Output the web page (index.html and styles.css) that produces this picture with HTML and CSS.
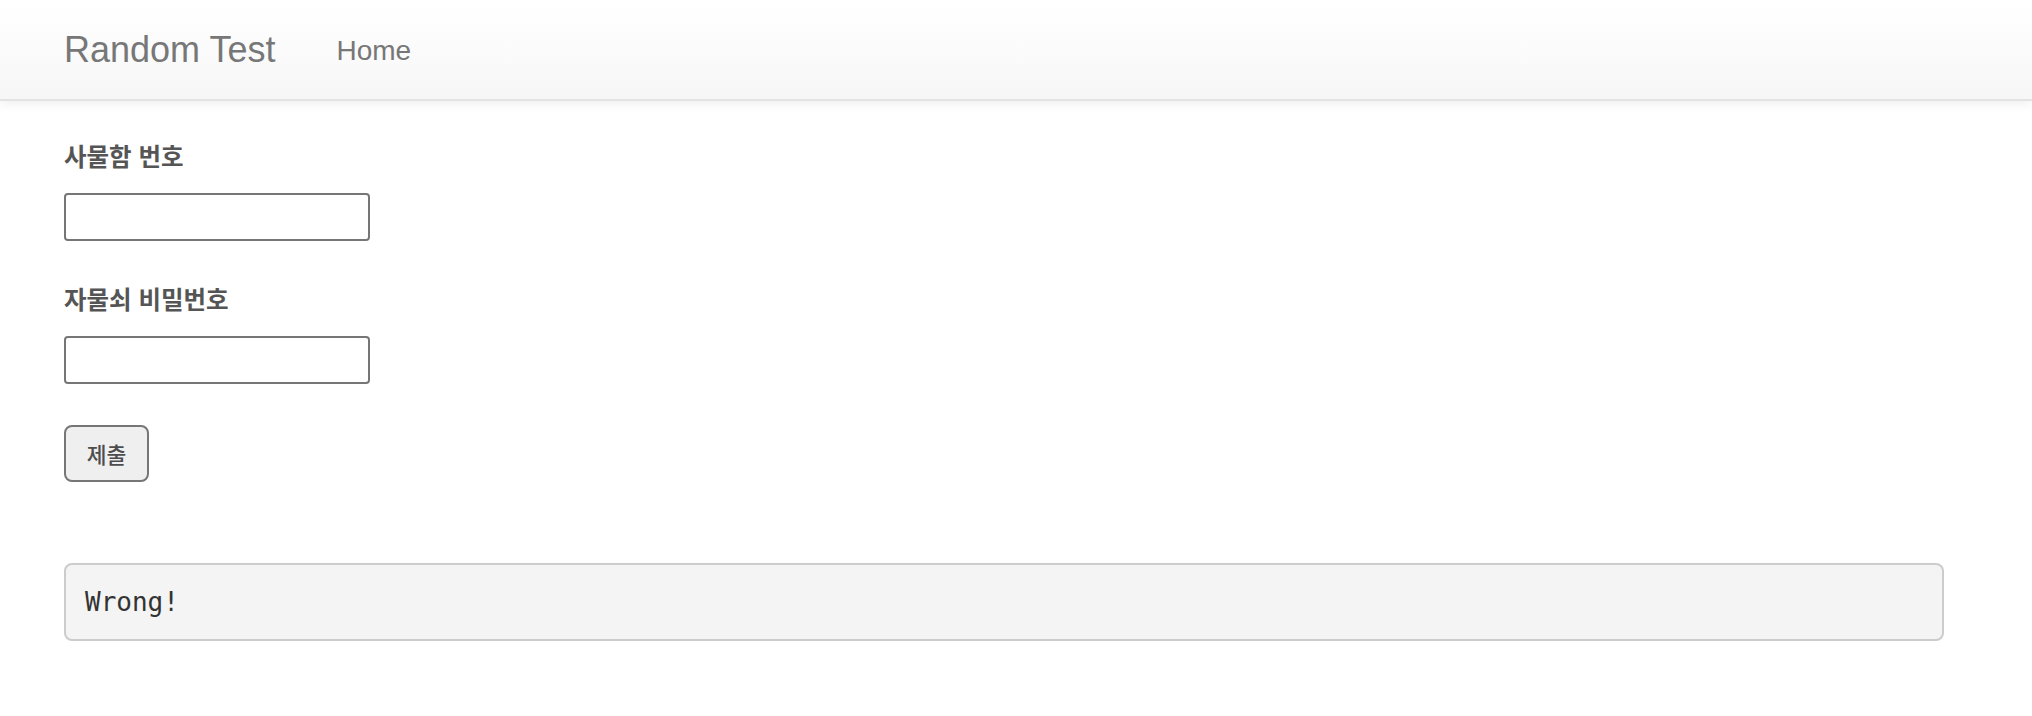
FILE: index.html
```html
<!DOCTYPE html>
<html lang="ko">
<head>
<meta charset="utf-8">
<title>Random Test</title>
<link rel="stylesheet" href="styles.css">
</head>
<body>
<nav class="navbar">
  <div class="navbar-inner">
    <a class="brand" href="#">Random Test</a>
    <ul class="nav">
      <li><a class="nav-link" href="#">Home</a></li>
    </ul>
  </div>
</nav>
<main class="container">
  <form class="form">
    <div class="field">
      <label class="label" for="box">사물함 번호</label>
      <input class="input" id="box" type="text">
    </div>
    <div class="field">
      <label class="label" for="pw">자물쇠 비밀번호</label>
      <input class="input" id="pw" type="text">
    </div>
    <button class="btn" type="button">제출</button>
  </form>
  <pre class="result">Wrong!</pre>
</main>
</body>
</html>
```
FILE: styles.css
```css
* { box-sizing: border-box; }
html, body { margin: 0; padding: 0; background: #fff; }
body {
  font-family: "Liberation Sans", "Noto Sans CJK KR", Arial, sans-serif;
  color: #333;
}
.navbar {
  height: 101px;
  background: linear-gradient(to bottom, #ffffff 0%, #f7f7f7 100%);
  border-bottom: 2px solid #e3e3e3;
  box-shadow: 0 2px 10px rgba(0, 0, 0, 0.075);
}
.navbar-inner {
  display: flex;
  align-items: flex-start;
  padding-left: 64px;
}
.brand {
  font-size: 36px;
  line-height: 40px;
  padding-top: 30px;
  color: #777;
  text-decoration: none;
}
.nav {
  list-style: none;
  margin: 0 0 0 61px;
  padding: 0;
  display: flex;
}
.nav-link {
  display: block;
  font-size: 28px;
  line-height: 40px;
  padding-top: 31px;
  color: #777;
  text-decoration: none;
}
.container {
  width: 1880px;
  margin-left: 64px;
  padding-top: 40px;
}
.form {
  display: flex;
  flex-direction: column;
  align-items: flex-start;
}
.field {
  display: flex;
  flex-direction: column;
  align-items: flex-start;
  gap: 22px;
  margin-bottom: 43px;
}
.field:nth-child(2) { margin-bottom: 41px; }
.label {
  font-family: "Noto Sans CJK KR", "Liberation Sans", sans-serif;
  font-weight: 700;
  font-size: 24.5px;
  line-height: 30px;
  color: #555;
}
.input {
  width: 306px;
  height: 48px;
  border: 2px solid #767676;
  border-radius: 4px;
  background: #fff;
  padding: 2px 4px;
  margin: 0;
  font-size: 26px;
}
.btn {
  width: 85px;
  height: 57px;
  margin: 0;
  padding: 0;
  background: #efefef;
  border: 2px solid #767676;
  border-radius: 8px;
  font-family: "Noto Sans CJK KR", sans-serif;
  font-weight: 500;
  font-size: 21.5px;
  color: #4d4d4d;
}
.result {
  margin: 81px 0 0;
  padding: 19px;
  height: 78px;
  background: #f4f4f4;
  border: 2px solid #cccccc;
  border-radius: 8px;
  font-family: "DejaVu Sans Mono", "Liberation Mono", monospace;
  font-size: 26px;
  line-height: 37px;
  color: #333;
  overflow: hidden;
}
```
